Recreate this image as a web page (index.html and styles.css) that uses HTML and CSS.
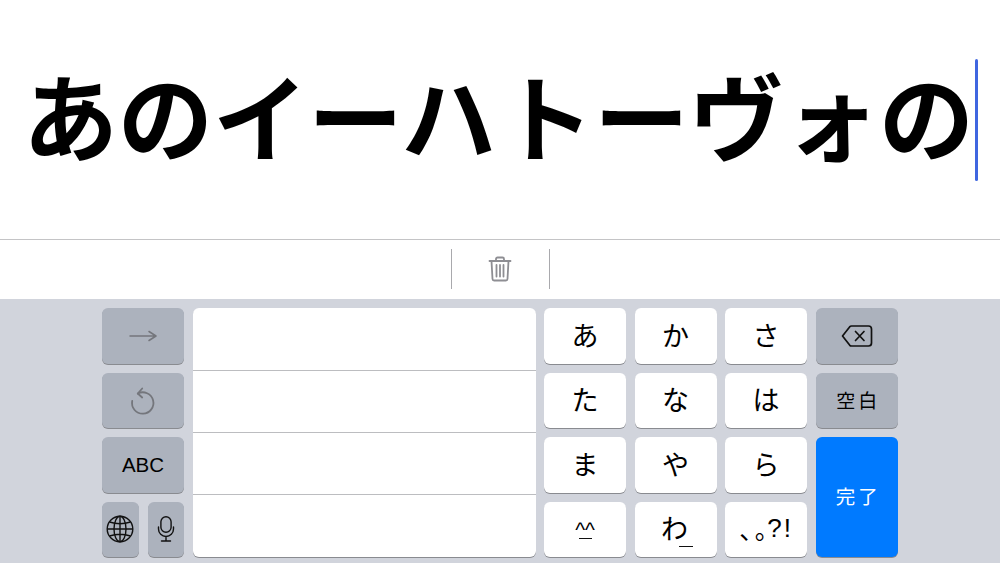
FILE: index.html
```html
<!DOCTYPE html>
<html lang="ja">
<head>
  <meta charset="UTF-8"/>
  <meta name="viewport" content="width=device-width, initial-scale=1"/>
  <title>Keyboard</title>
  <link rel="stylesheet" href="styles.css">
</head>
<body>
  <div class="editor">
    <span class="editor-text">あのイーハトーヴォの</span><span class="caret"></span>
  </div>
  <div class="toolbar">
    <div class="tool-btn">
      <svg width="24" height="26" viewBox="0 0 24 26" fill="none" stroke="#8e8e93" stroke-width="1.800" stroke-linecap="round" stroke-linejoin="round">
        <path d="M1.500 5h21"/>
        <path d="M8 5V3a1.500 1.500 0 0 1 1.500-1.500h5A1.500 1.500 0 0 1 16 3v2"/>
        <path d="M3.500 5l1 18a1.600 1.600 0 0 0 1.600 1.500h11.800a1.600 1.600 0 0 0 1.600-1.500l1-18"/>
        <path d="M8.500 9v11.500M12 9v11.500M15.500 9v11.500"/>
      </svg>
    </div>
  </div>
  <div class="keyboard">
    <div class="key key-gray">
      <svg width="30" height="14" viewBox="0 0 30 14" fill="none" stroke="#74767c" stroke-width="1.500" stroke-linecap="round" stroke-linejoin="round">
        <path d="M2 7h26M21 2.500l7 4.500-7 4.500"/>
      </svg>
    </div>
    <div class="candidates">
      <div class="candidate-row"></div>
      <div class="candidate-row"></div>
      <div class="candidate-row"></div>
      <div class="candidate-row"></div>
    </div>
    <div class="key"><span class="kana">あ</span></div>
    <div class="key"><span class="kana">か</span></div>
    <div class="key"><span class="kana">さ</span></div>
    <div class="key key-gray">
      <svg width="32" height="24" viewBox="0 0 32 24" fill="none" stroke="#111" stroke-width="1.700" stroke-linecap="round" stroke-linejoin="round">
        <path d="M10.500 2h17a3 3 0 0 1 3 3v14a3 3 0 0 1-3 3h-17a2.500 2.500 0 0 1-1.900-.9L1.500 12l7.100-9.100A2.500 2.500 0 0 1 10.500 2z"/>
        <path d="M14.500 7.500l8.500 9M23 7.500l-8.500 9"/>
      </svg>
    </div>

    <div class="key key-gray">
      <svg width="30" height="34" viewBox="0 0 30 34" fill="none" stroke="#74767c" stroke-width="1.800" stroke-linecap="round" stroke-linejoin="round">
        <path d="M9.800 10.500A10.700 10.700 0 1 1 4.200 18"/>
        <path d="M14.200 5.500L9.800 10.500l4.400 4"/>
      </svg>
    </div>
    <div class="key"><span class="kana">た</span></div>
    <div class="key"><span class="kana">な</span></div>
    <div class="key"><span class="kana">は</span></div>
    <div class="key key-gray key-small">空白</div>

    <div class="key key-gray key-abc">ABC</div>
    <div class="key"><span class="kana">ま</span></div>
    <div class="key"><span class="kana">や</span></div>
    <div class="key"><span class="kana">ら</span></div>
    <div class="key key-done">完了</div>

    <div class="key-pair">
      <div class="key key-gray">
        <svg width="28" height="28" viewBox="0 0 28 28" fill="none" stroke="#111" stroke-width="1.400">
          <circle cx="14" cy="14" r="12.800"/>
          <ellipse cx="14" cy="14" rx="6" ry="12.800"/>
          <path d="M14 1.200v25.600M1.200 14h25.600M3.500 7Q14 10.500 24.500 7M3.500 21Q14 17.500 24.500 21"/>
        </svg>
      </div>
      <div class="key key-gray">
        <svg width="18" height="28" viewBox="0 0 18 28" fill="none" stroke="#111" stroke-width="1.400" stroke-linecap="round">
          <rect x="3.900" y="1.700" width="10.200" height="15.600" rx="5.100"/>
          <path d="M1.500 12v2a7.500 7.500 0 0 0 15 0v-2M9 21.500V26M4.500 26h9"/>
        </svg>
      </div>
    </div>
    <div class="key key-kaomoji">
      <span class="kaomoji-eyes">^^</span>
      <span class="kaomoji-mouth"></span>
    </div>
    <div class="key"><span class="kana">わ</span><span class="wa-mark"></span></div>
    <div class="key key-punct"><span class="punct-comma">、</span>。<span class="punct-latin">?!</span></div>
  </div>
</body>
</html>
```

FILE: styles.css
```css
html, body { margin: 0; padding: 0; }
body { width: 1000px; height: 563px; overflow: hidden; background: #fff; color: #000; font-family: "Noto Sans CJK JP", "Liberation Sans", sans-serif; }

.editor { height: 239px; display: flex; align-items: center; padding-left: 23px; box-sizing: border-box; }
.editor-text { font-size: 95px; font-weight: 700; line-height: 122px; white-space: nowrap; margin-top: -12px; }
.caret { width: 3px; height: 122px; margin-left: 1px; background: #3f66e0; border-radius: 2px; }

.toolbar { height: 60px; box-sizing: border-box; border-top: 1px solid #c4c4c6; padding-bottom: 1px; display: flex; justify-content: center; align-items: center; }
.tool-btn { width: 97px; height: 40px; border-left: 1px solid #a9a9ad; border-right: 1px solid #a9a9ad; display: flex; justify-content: center; align-items: center; }

.keyboard {
  height: 264px; box-sizing: border-box; padding: 9px 0 0 102px; background: #d1d4dc;
  display: grid; grid-template-columns: 82px 343px 82px 82px 82px 82.5px; grid-auto-rows: 55.5px; gap: 9px 8.5px;
}
.key {
  display: flex; justify-content: center; align-items: center; background: #fff; border-radius: 6px;
  box-shadow: 0 1px 0 #898b90; font-size: 27px; line-height: 1;
}
.kana { margin-top: -3px; }
.key-gray { background: #acb2bd; }
.key-small { font-size: 19px; letter-spacing: 3px; padding: 0 0 2px 3px; }
.key-abc { font-family: "Liberation Sans", sans-serif; font-size: 20.500px; }
.key-done { grid-row: span 2; background: #007aff; color: #fff; font-size: 19.500px; letter-spacing: 3px; padding: 0 0 2px 3px; }

.key-punct { font-size: 25px; font-feature-settings: "halt"; padding-bottom: 2px; }
.punct-comma { margin-right: 3px; }
.punct-latin { font-family: "Liberation Sans", sans-serif; font-size: 26px; letter-spacing: 2px; }

.key-kaomoji { flex-direction: column; gap: 1px; }
.kaomoji-eyes { font-family: "Liberation Sans", sans-serif; font-size: 21px; line-height: 20px; margin-bottom: -3px; }
.kaomoji-mouth { width: 13px; height: 1.500px; background: #111; }
.wa-mark { width: 14px; height: 1.500px; background: #111; margin: 34px -3px 0 -9px; }

.candidates { grid-row: span 4; grid-column: 2; background: #fff; border-radius: 6px; box-shadow: 0 1px 0 #898b90; display: flex; flex-direction: column; }
.candidate-row { height: 62.500px; box-sizing: border-box; border-bottom: 1px solid #bcbdc0; }
.candidate-row:first-child { height: 63px; }
.candidate-row:last-child { border-bottom: none; }

.key-pair { display: flex; gap: 9px; }
.key-pair .key { flex: 1; }
```
